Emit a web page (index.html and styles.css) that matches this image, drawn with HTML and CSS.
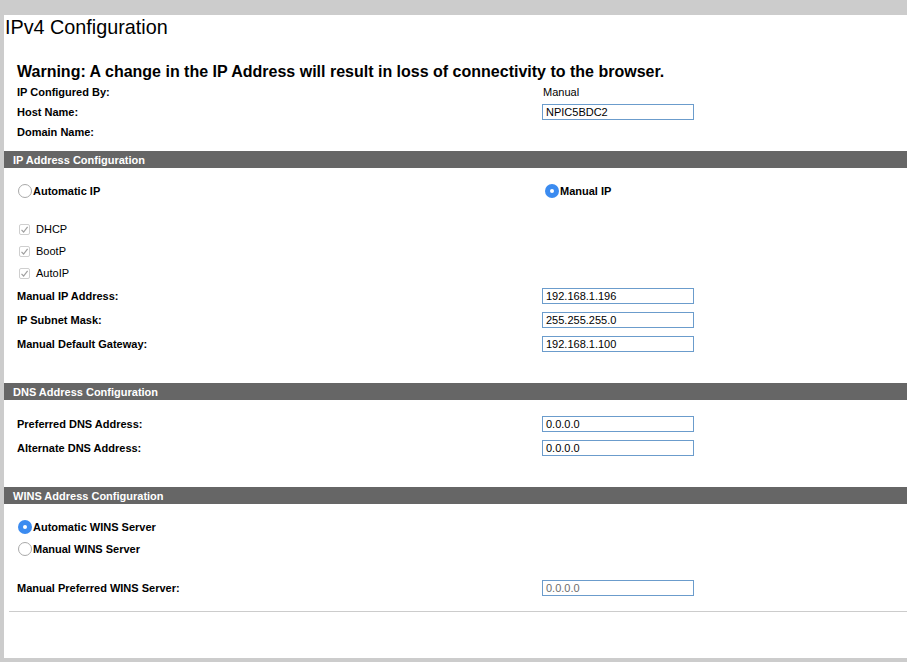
FILE: index.html
```html
<!DOCTYPE html>
<html>
<head>
<meta charset="utf-8">
<link rel="stylesheet" href="styles.css">
</head>
<body>
<div class="page">
  <h1 class="title">IPv4 Configuration</h1>
  <div class="content">
    <div class="warning">Warning: A change in the IP Address will result in loss of connectivity to the browser.</div>
    <div class="row r20"><span class="lbl">IP Configured By:</span><span class="val">Manual</span></div>
    <div class="row r20"><span class="lbl">Host Name:</span><span class="val"><span class="inp">NPIC5BDC2</span></span></div>
    <div class="row r20"><span class="lbl">Domain Name:</span><span class="val"></span></div>
  </div>

  <div class="sect sect1">IP Address Configuration</div>
  <div class="content">
    <div class="row r20 first-radio">
      <span class="lbl"><span class="radio"></span><span class="rtext">Automatic IP</span></span>
      <span class="val val-radio"><span class="radio on"></span><span class="rtext">Manual IP</span></span>
    </div>
    <div class="checks">
      <div class="check-row"><span class="cb"><svg width="9" height="9" viewBox="0 0 9 9"><path d="M1.5 4.8 L3.6 7 L7.6 1.8" fill="none" stroke="#a0a0a0" stroke-width="1.2"/></svg></span><span class="ctext">DHCP</span></div>
      <div class="check-row"><span class="cb"><svg width="9" height="9" viewBox="0 0 9 9"><path d="M1.5 4.8 L3.6 7 L7.6 1.8" fill="none" stroke="#a0a0a0" stroke-width="1.2"/></svg></span><span class="ctext">BootP</span></div>
      <div class="check-row"><span class="cb"><svg width="9" height="9" viewBox="0 0 9 9"><path d="M1.5 4.8 L3.6 7 L7.6 1.8" fill="none" stroke="#a0a0a0" stroke-width="1.2"/></svg></span><span class="ctext">AutoIP</span></div>
    </div>
    <div class="row r24"><span class="lbl">Manual IP Address:</span><span class="val"><span class="inp">192.168.1.196</span></span></div>
    <div class="row r24"><span class="lbl">IP Subnet Mask:</span><span class="val"><span class="inp">255.255.255.0</span></span></div>
    <div class="row r24"><span class="lbl">Manual Default Gateway:</span><span class="val"><span class="inp">192.168.1.100</span></span></div>
  </div>

  <div class="sect sect2">DNS Address Configuration</div>
  <div class="content dns">
    <div class="row r24"><span class="lbl">Preferred DNS Address:</span><span class="val"><span class="inp">0.0.0.0</span></span></div>
    <div class="row r24"><span class="lbl">Alternate DNS Address:</span><span class="val"><span class="inp">0.0.0.0</span></span></div>
  </div>

  <div class="sect sect3">WINS Address Configuration</div>
  <div class="content wins">
    <div class="radio-row"><span class="radio on"></span><span class="rtext">Automatic WINS Server</span></div>
    <div class="radio-row"><span class="radio"></span><span class="rtext">Manual WINS Server</span></div>
    <div class="row r24 wins-pref"><span class="lbl">Manual Preferred WINS Server:</span><span class="val"><span class="inp disabled">0.0.0.0</span></span></div>
  </div>
  <div class="rule"></div>
</div>
</body>
</html>
```

FILE: styles.css
```css
html, body {
  margin: 0;
  padding: 0;
}
body {
  background: #cccccc;
  font-family: "Liberation Sans", Arial, sans-serif;
  color: #000;
  overflow: hidden;
}
.page {
  margin: 15px 0 0 4px;
  height: 643px;
  background: #ffffff;
}
.title {
  margin: 0;
  padding: 1px 0 0 1px;
  height: 24px;
  font-size: 19.8px;
  font-weight: normal;
  line-height: 23px;
}
.content {
  padding-left: 13px;
}
.warning {
  margin-top: 22px;
  height: 20px;
  line-height: 20px;
  font-size: 16px;
  font-weight: bold;
}
.row {
  display: grid;
  grid-template-columns: 525px 1fr;
  align-items: center;
  font-size: 11px;
}
.r20 { height: 20px; }
.r24 { height: 24px; }
.lbl {
  font-weight: bold;
  display: flex;
  align-items: center;
}
.val {
  display: flex;
  align-items: center;
  padding-left: 1px;
}
.inp {
  box-sizing: border-box;
  width: 152px;
  height: 16px;
  margin-left: -1px;
  border: 1px solid #6b9ccc;
  padding: 0 3px;
  line-height: 14px;
  font-size: 11px;
  font-weight: normal;
}
.inp.disabled {
  color: #6d6d6d;
}
.sect {
  box-sizing: border-box;
  height: 17px;
  line-height: 17px;
  padding-top: 1px;
  background: #666666;
  color: #ffffff;
  font-size: 11px;
  font-weight: bold;
  padding-left: 9px;
  overflow: hidden;
}
.sect1 { margin-top: 9px; }
.sect2 { margin-top: 27px; }
.sect3 { margin-top: 27px; }
.radio {
  box-sizing: border-box;
  display: inline-block;
  width: 14px;
  height: 14px;
  border-radius: 50%;
  border: 1px solid #a9a9a9;
  background: #fff;
  flex: none;
  position: relative;
}
.radio.on {
  border: none;
  background: #3b8bf0;
}
.radio.on::after {
  content: "";
  position: absolute;
  left: 5px;
  top: 5px;
  width: 4px;
  height: 4px;
  border-radius: 50%;
  background: #fff;
}
.rtext {
  font-weight: bold;
  font-size: 11px;
  margin-left: 1px;
}
.first-radio {
  margin-top: 13px;
}
.first-radio .lbl {
  padding-left: 1px;
}
.val-radio {
  padding-left: 3px;
}
.checks {
  margin-top: 17px;
}
.check-row {
  height: 22px;
  display: flex;
  align-items: center;
  font-size: 11px;
}
.cb {
  box-sizing: border-box;
  width: 11px;
  height: 11px;
  border: 1px solid #cfcfcf;
  border-radius: 2px;
  margin-left: 2px;
  display: flex;
  align-items: center;
  justify-content: center;
}
.ctext {
  margin-left: 6px;
}
.dns {
  padding-top: 12px;
}
.wins {
  padding-top: 12px;
}
.radio-row {
  height: 22px;
  display: flex;
  align-items: center;
  padding-left: 1px;
}
.wins-pref {
  margin-top: 16px;
}
.rule {
  margin: 11px 0 0 5px;
  height: 1px;
  background: #cccccc;
}
```
